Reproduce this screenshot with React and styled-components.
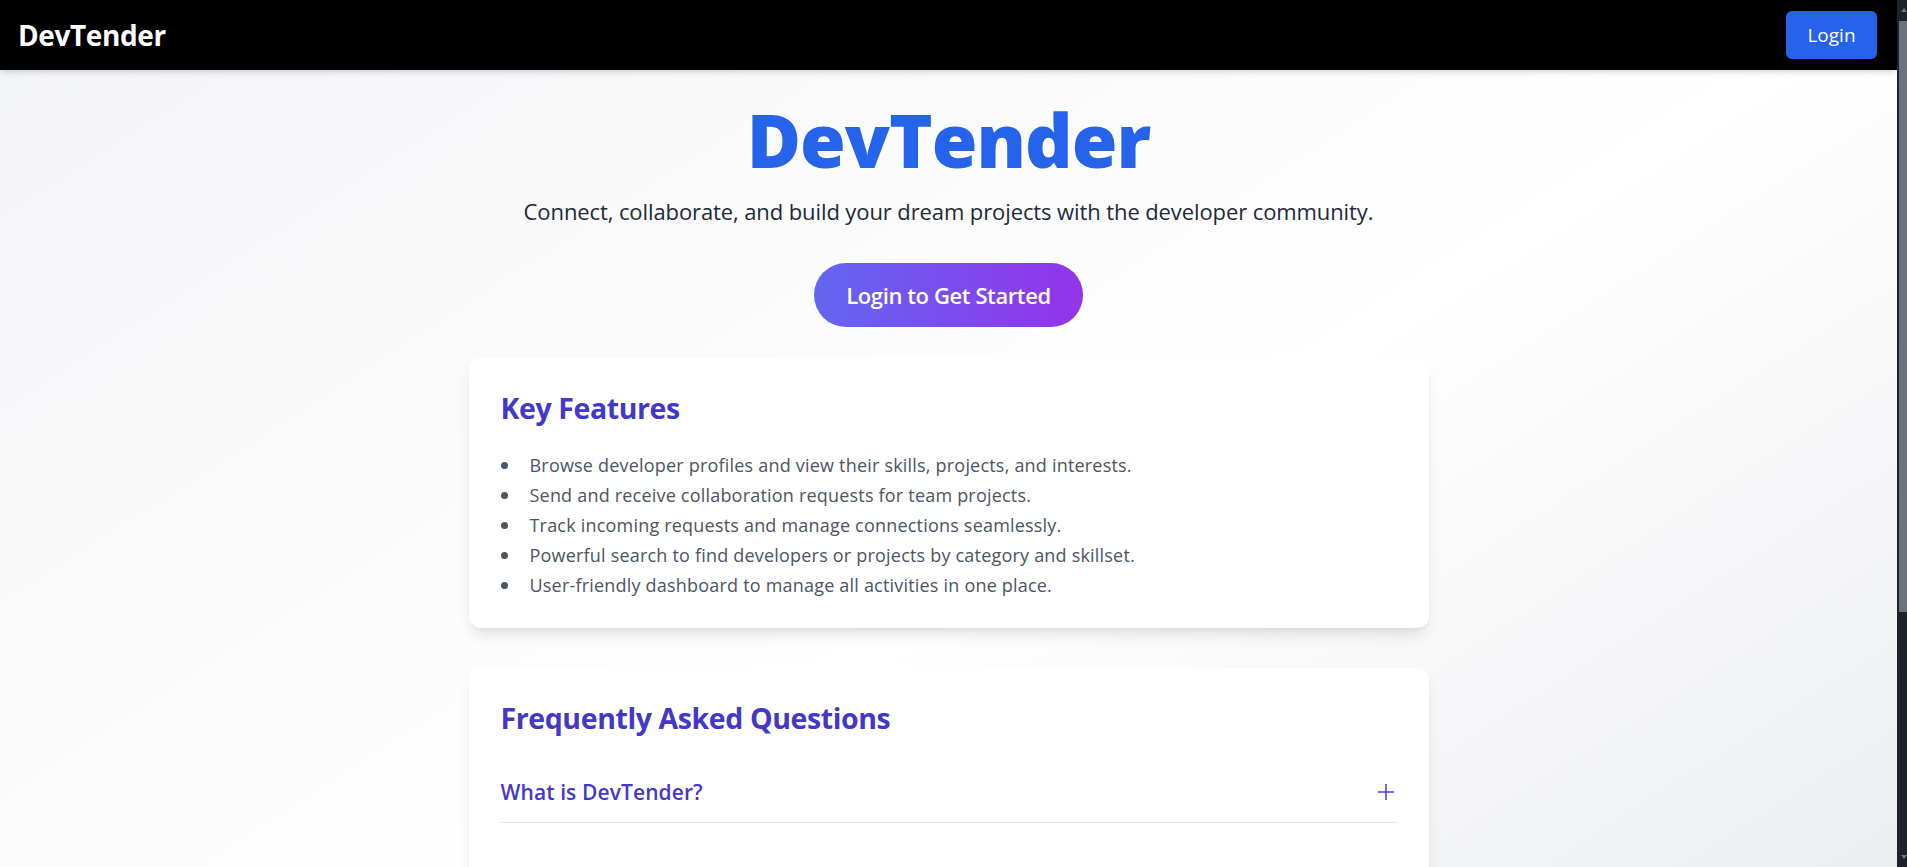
import React, { useState } from "react";
import styled, { createGlobalStyle } from "styled-components";

const GlobalStyle = createGlobalStyle`
  html, body {
    margin: 0;
    padding: 0;
  }
  body {
    font-family: "Open Sans", "Noto Sans", sans-serif;
    color: #1f2937;
    background: #1e232b;
  }
  * {
    box-sizing: border-box;
  }
`;

const features = [
  "Browse developer profiles and view their skills, projects, and interests.",
  "Send and receive collaboration requests for team projects.",
  "Track incoming requests and manage connections seamlessly.",
  "Powerful search to find developers or projects by category and skillset.",
  "User-friendly dashboard to manage all activities in one place.",
];

const faqs = [
  {
    q: "What is DevTender?",
    a: "DevTender is a platform where developers meet, share their work and team up on projects they care about.",
  },
  {
    q: "How do I send a collaboration request?",
    a: "Open a developer's profile and press the Connect button. They will see your request on their dashboard.",
  },
  {
    q: "Is DevTender free to use?",
    a: "Yes, creating an account, browsing profiles and sending requests are all free.",
  },
  {
    q: "Can I search for developers by skill?",
    a: "Use the search page to filter developers by language, framework, category or experience.",
  },
  {
    q: "How do I manage my connections?",
    a: "All accepted requests show up under Connections, where you can accept, reject or remove them at any time.",
  },
];

const App = () => {
  const [open, setOpen] = useState(null);

  return (
    <>
      <GlobalStyle />
      <Page>
        <NavBar>
          <Brand>DevTender</Brand>
          <NavButton>Login</NavButton>
        </NavBar>

        <Main>
          <Hero>
            <Title>DevTender</Title>
            <Tagline>Connect, collaborate, and build your dream projects with the developer community.</Tagline>
            <CtaButton>Login to Get Started</CtaButton>
          </Hero>

          <Card>
            <CardTitle>Key Features</CardTitle>
            <FeatureList>
              {features.map((f) => (
                <Feature key={f}>{f}</Feature>
              ))}
            </FeatureList>
          </Card>

          <Card>
            <CardTitle>Frequently Asked Questions</CardTitle>
            <FaqList>
              {faqs.map((item, i) => (
                <FaqItem key={item.q}>
                  <FaqQuestion onClick={() => setOpen(open === i ? null : i)}>
                    <span>{item.q}</span>
                    <PlusIcon viewBox="0 0 18 18">
                      <line x1="1" y1="9" x2="17" y2="9" />
                      {open !== i && <line x1="9" y1="1" x2="9" y2="17" />}
                    </PlusIcon>
                  </FaqQuestion>
                  {open === i && <FaqAnswer>{item.a}</FaqAnswer>}
                </FaqItem>
              ))}
            </FaqList>
          </Card>
        </Main>
      </Page>

      <ScrollRail>
        <RailArrow />
        <RailThumb />
        <RailArrow $down />
      </ScrollRail>
    </>
  );
};

const Page = styled.div`
  min-height: 100vh;
  margin-right: 10px;
  background: linear-gradient(to bottom right, #f3f4f6, #ffffff, #e5e7eb);
`;

const NavBar = styled.nav`
  height: 70px;
  background: #000000;
  display: flex;
  align-items: center;
  justify-content: space-between;
  padding: 0 20px 0 18px;
  box-shadow: 0 4px 6px -1px rgba(0, 0, 0, 0.1), 0 2px 4px -2px rgba(0, 0, 0, 0.1);
`;

const Brand = styled.div`
  color: #ffffff;
  font-size: 28px;
  font-weight: 700;
  letter-spacing: -0.4px;
`;

const NavButton = styled.button`
  font-family: inherit;
  background: #2563eb;
  color: #ffffff;
  border: none;
  border-radius: 6px;
  width: 91px;
  height: 48px;
  font-size: 19px;
  cursor: pointer;
`;

const Main = styled.main`
  max-width: 1024px;
  margin: 0 auto;
  padding: 32px;
  display: flex;
  flex-direction: column;
  gap: 40px;
`;

const Hero = styled.section`
  display: flex;
  flex-direction: column;
  align-items: center;
  margin-bottom: -9px;
`;

const Title = styled.h1`
  margin: 0;
  font-size: 74px;
  line-height: 76px;
  font-weight: 800;
  color: #2563eb;
  letter-spacing: -1px;
`;

const Tagline = styled.p`
  margin: 19px 0 0;
  font-size: 22px;
  line-height: 28px;
  color: #1f2937;
  letter-spacing: -0.1px;
`;

const CtaButton = styled.button`
  font-family: inherit;
  margin-top: 38px;
  height: 64px;
  padding: 0 32px;
  border: none;
  border-radius: 999px;
  background: linear-gradient(to right, #6366f1, #9333ea);
  color: #ffffff;
  font-size: 22px;
  font-weight: 600;
  letter-spacing: -0.4px;
  cursor: pointer;
`;

const Card = styled.section`
  background: #ffffff;
  border-radius: 12px;
  padding: 32px 32px 28px;
  box-shadow: 0 10px 15px -3px rgba(0, 0, 0, 0.1), 0 4px 6px -4px rgba(0, 0, 0, 0.1);
  display: flex;
  flex-direction: column;
`;

const CardTitle = styled.h2`
  margin: 0 0 24px;
  font-size: 28.5px;
  line-height: 36px;
  font-weight: 700;
  color: #4338ca;
  letter-spacing: -0.4px;
`;

const FeatureList = styled.ul`
  margin: 0;
  padding: 0;
  list-style: none;
  font-size: 18px;
  line-height: 30px;
  color: #4b5563;
  letter-spacing: 0.2px;
`;

const Feature = styled.li`
  &::before {
    content: "";
    display: inline-block;
    width: 7px;
    height: 7px;
    margin-right: 22px;
    border-radius: 50%;
    background: #4b5563;
    vertical-align: 3px;
  }
`;

const FaqList = styled.div`
  display: flex;
  flex-direction: column;
  gap: 24px;
  margin-top: 2px;
`;

const FaqItem = styled.div`
  padding: 16px 0;
  border-bottom: 1px solid #e5e7eb;
`;

const FaqQuestion = styled.div`
  display: flex;
  align-items: center;
  justify-content: space-between;
  font-size: 21px;
  line-height: 28px;
  font-weight: 600;
  color: #4338ca;
  letter-spacing: 0.1px;
  cursor: pointer;
`;

const PlusIcon = styled.svg`
  width: 18px;
  height: 18px;
  margin-right: 2px;
  stroke: #4f46e5;
  stroke-width: 1.6;
  fill: none;
`;

const FaqAnswer = styled.p`
  margin: 12px 0 0;
  font-size: 18px;
  line-height: 28px;
  color: #4b5563;
`;

const ScrollRail = styled.div`
  position: fixed;
  top: 0;
  right: 0;
  bottom: 0;
  width: 10px;
  background: #1e232b;
  display: flex;
  flex-direction: column;
  align-items: flex-end;
`;

const RailArrow = styled.div`
  height: 17px;
  width: 10px;
  display: flex;
  justify-content: flex-end;
  align-items: ${(p) => (p.$down ? "flex-end" : "flex-start")};
  padding: ${(p) => (p.$down ? "0 0 8px" : "8px 0 0")};
  margin-top: ${(p) => (p.$down ? "auto" : "0")};

  &::after {
    content: "";
    border-left: 3px solid transparent;
    border-right: 3px solid transparent;
    ${(p) => (p.$down ? "border-top: 4px solid #6b7280;" : "border-bottom: 4px solid #6b7280;")}
  }
`;

const RailThumb = styled.div`
  width: 8px;
  height: 591px;
  margin-top: 4px;
  background: #6b7280;
`;

export default App;
